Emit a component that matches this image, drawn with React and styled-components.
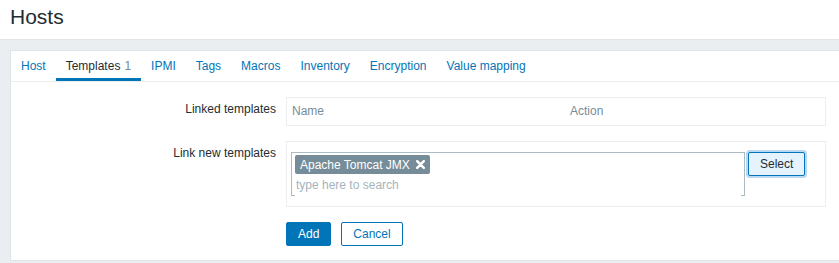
import styled, { createGlobalStyle } from "styled-components";

const blue = "#0275b8";
const text = "#1f2c33";
const gray = "#768d99";
const line = "#ebeef0";

const GlobalStyle = createGlobalStyle`
  html, body {
    margin: 0;
    padding: 0;
    background: ${line};
    overflow: hidden;
  }
  body {
    font-family: "Liberation Sans", Arial, sans-serif;
    font-size: 12px;
    color: ${text};
  }
  * {
    box-sizing: border-box;
  }
`;

const tabs = [
  { label: "Host" },
  { label: "Templates", count: 1, active: true },
  { label: "IPMI" },
  { label: "Tags" },
  { label: "Macros" },
  { label: "Inventory" },
  { label: "Encryption" },
  { label: "Value mapping" },
];

const App = () => {
  return (
    <>
      <GlobalStyle />
      <Header>
        <Title>Hosts</Title>
      </Header>
      <Main>
        <Card>
          <TabBar>
            {tabs.map((tab) => (
              <Tab key={tab.label} $active={tab.active}>
                {tab.label}
                {tab.count && <Count>{tab.count}</Count>}
              </Tab>
            ))}
          </TabBar>
          <Form>
            <Label>Linked templates</Label>
            <LinkedTable>
              <HeadCell $width="278px">Name</HeadCell>
              <HeadCell>Action</HeadCell>
            </LinkedTable>

            <Label>Link new templates</Label>
            <FieldBox>
              <MultiSelect>
                <TagList>
                  <Tag>
                    Apache Tomcat JMX
                    <RemoveButton type="button" aria-label="Remove">
                      <svg width="9" height="9" viewBox="0 0 9 9">
                        <path
                          d="M1.2 1.2 L7.8 7.8 M7.8 1.2 L1.2 7.8"
                          stroke="#fff"
                          strokeWidth="2.4"
                          strokeLinecap="round"
                        />
                      </svg>
                    </RemoveButton>
                  </Tag>
                </TagList>
                <SearchInput placeholder="type here to search" />
              </MultiSelect>
              <SelectButton type="button">Select</SelectButton>
            </FieldBox>

            <span />
            <Actions>
              <Button $primary>Add</Button>
              <Button>Cancel</Button>
            </Actions>
          </Form>
        </Card>
      </Main>
    </>
  );
};

const Header = styled.header`
  height: 40px;
  padding: 5px 10px 0;
  background: #fff;
  border-bottom: 1px solid #dfe4e7;
`;

const Title = styled.h1`
  margin: 0;
  font-size: 21px;
  font-weight: normal;
  line-height: 24px;
  color: ${text};
`;

const Main = styled.main`
  padding: 10px 0 0 10px;
`;

const Card = styled.section`
  width: 840px;
  background: #fff;
  border: 1px solid #dfe4e7;
  border-right: none;
`;

const TabBar = styled.nav`
  display: flex;
  border-bottom: 1px solid ${line};
`;

const Tab = styled.a`
  display: block;
  padding: 8px 10px 5px;
  line-height: 14px;
  color: ${(p) => (p.$active ? text : blue)};
  border-bottom: 3px solid ${(p) => (p.$active ? blue : "transparent")};
  cursor: pointer;
`;

const Count = styled.span`
  margin-left: 4px;
  color: ${gray};
`;

const Form = styled.div`
  display: grid;
  grid-template-columns: 265px 540px;
  column-gap: 10px;
  row-gap: 15px;
  padding: 15px 0 14px;

  & > :nth-child(5) {
    margin-top: -1px;
  }
`;

const Label = styled.label`
  padding-top: 5px;
  line-height: 14px;
  text-align: right;
  color: ${text};
`;

const LinkedTable = styled.div`
  display: flex;
  height: 29px;
  border: 1px solid ${line};
`;

const HeadCell = styled.div`
  width: ${(p) => p.$width || "auto"};
  padding: 6px 5px 0;
  line-height: 14px;
  color: ${gray};
`;

const FieldBox = styled.div`
  display: flex;
  align-items: flex-start;
  gap: 3px;
  padding: 10px 4px;
  border: 1px solid ${line};
`;

const MultiSelect = styled.div`
  width: 454px;
  height: 44px;
  padding: 1px 3px 0;
  border: 1px solid #acbbc2;
  background: #fff;
`;

const TagList = styled.div`
  display: flex;
  height: 20px;
  padding-top: 1px;
`;

const Tag = styled.span`
  display: inline-flex;
  align-items: center;
  height: 19px;
  padding-left: 5px;
  border-radius: 2px;
  background: ${gray};
  color: #fff;
  line-height: 14px;
`;

const RemoveButton = styled.button`
  display: flex;
  align-items: center;
  justify-content: center;
  width: 20px;
  height: 19px;
  padding: 0 0 0 2px;
  border: none;
  background: none;
  cursor: pointer;
`;

const SearchInput = styled.input`
  display: block;
  width: 100%;
  height: 22px;
  padding: 0 1px;
  border: none;
  outline: none;
  font-family: inherit;
  font-size: 12px;
  color: ${text};

  &::placeholder {
    color: #a5b4bb;
  }
`;

const SelectButton = styled.button`
  height: 24px;
  padding: 0 11px;
  border: 1px solid ${blue};
  border-radius: 2px;
  background: #e5f3fe;
  box-shadow: 0 0 0 2px #b7d9f3;
  font-family: inherit;
  font-size: 12px;
  color: ${text};
  cursor: pointer;
`;

const Actions = styled.div`
  display: flex;
  gap: 10px;
`;

const Button = styled.button`
  height: 24px;
  padding: 0 11px;
  border: 1px solid ${blue};
  border-radius: 2px;
  background: ${(p) => (p.$primary ? blue : "#fff")};
  color: ${(p) => (p.$primary ? "#fff" : blue)};
  font-family: inherit;
  font-size: 12px;
  cursor: pointer;
`;

export default App;
